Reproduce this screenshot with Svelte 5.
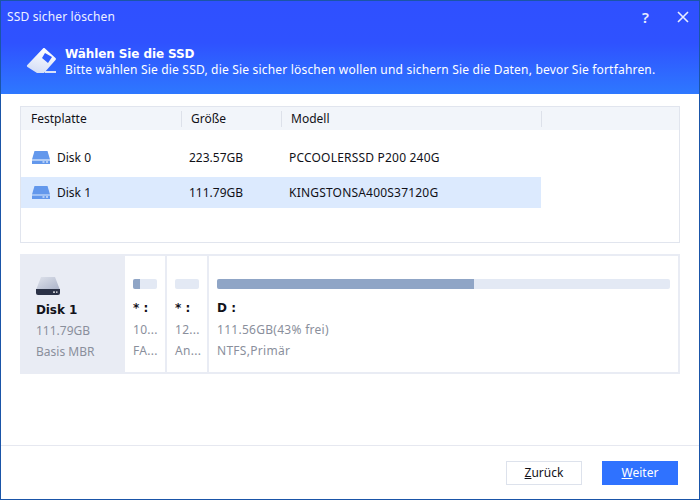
<script>
  const disks = [
    { name: 'Disk 0', size: '223.57GB', model: 'PCCOOLERSSD P200 240G', selected: false },
    { name: 'Disk 1', size: '111.79GB', model: 'KINGSTONSA400S37120G', selected: true }
  ];
  const parts = [
    { cls: 'small', label: '* :', size: '10...', fs: 'FA...', used: 30 },
    { cls: 'small', label: '* :', size: '12...', fs: 'An...', used: 0 },
    { cls: 'wide', label: 'D :', size: '111.56GB(43% frei)', fs: 'NTFS,Primär', used: 56.8 }
  ];
</script>

<div class="window">
  <div class="head">
    <div class="titlebar">
      <span class="title">SSD sicher löschen</span>
      <div class="controls">
        <span class="help">?</span>
        <svg width="12" height="12" viewBox="0 0 12 12"><path d="M1 1l10 10M11 1L1 11" stroke="#e8edff" stroke-width="1.6" fill="none" /></svg>
      </div>
    </div>
    <div class="banner">
      <svg class="eraser" width="32" height="27" viewBox="0 0 32 27">
        <defs>
          <linearGradient id="er" x1="0.6" y1="0" x2="0.3" y2="1">
            <stop offset="0" stop-color="#ffffff" />
            <stop offset="1" stop-color="#d3ddf6" />
          </linearGradient>
        </defs>
        <path fill-rule="evenodd" fill="url(#er)" d="M18 1.500c.6-.6 1.400-.6 2 0L30.500 11c.6.6.6 1.400 0 2L19 26H12L2.500 20c-.8-.6-.8-1.500-.2-2.100zM20 6l-3 5 6 5 4-6z" />
        <rect x="20" y="24" width="11" height="2" fill="#d8e1f8" />
      </svg>
      <div class="banner-text">
        <b>Wählen Sie die SSD</b>
        <span>Bitte wählen Sie die SSD, die Sie sicher löschen wollen und sichern Sie die Daten, bevor Sie fortfahren.</span>
      </div>
    </div>
  </div>

  <div class="content">
    <div class="table">
      <div class="thead">
        <div class="th c1">Festplatte</div>
        <div class="th c2">Größe</div>
        <div class="th c3">Modell</div>
        <div class="th c4"></div>
      </div>
      <div class="tbody">
        {#each disks as d}
          <div class="row" class:selected={d.selected}>
            <div class="c1 disk">
              <svg width="20" height="13" viewBox="0 0 20 13">
                <path d="M3.500 0h13l2.500 8.500H1z" fill="#6398ec" />
                <rect x="1" y="9.500" width="18" height="3.500" fill="#6398ec" />
                <rect x="11.500" y="10.500" width="2" height="1" fill="#fff" />
                <rect x="15" y="10.500" width="2" height="1" fill="#fff" />
              </svg>
              {d.name}
            </div>
            <div class="c2">{d.size}</div>
            <div class="c3 model">{d.model}</div>
          </div>
        {/each}
      </div>
    </div>

    <div class="map">
      <div class="info">
        <svg width="24" height="18" viewBox="0 0 24 18">
          <defs>
            <linearGradient id="hd" x1="0" y1="0" x2="1" y2="1">
              <stop offset="0" stop-color="#dfe3ec" />
              <stop offset="1" stop-color="#aab2c8" />
            </linearGradient>
          </defs>
          <path d="M5 0h14l5 13H0z" fill="url(#hd)" />
          <path d="M0 12h24v4a2 2 0 0 1-2 2H2a2 2 0 0 1-2-2z" fill="#2b3246" />
          <rect x="17" y="14.500" width="2" height="1.200" fill="#fff" />
          <rect x="20" y="14.500" width="1.500" height="1.200" fill="#fff" />
        </svg>
        <b>Disk 1</b>
        <span>111.79GB</span>
        <span>Basis MBR</span>
      </div>
      {#each parts as p}
        <div class="part {p.cls}">
          <div class="bar"><div class="fill" style="width: {p.used}%"></div></div>
          <b>{p.label}</b>
          <span>{p.size}</span>
          <span>{p.fs}</span>
        </div>
      {/each}
    </div>
  </div>

  <div class="footer">
    <button class="btn"><u>Z</u>urück</button>
    <button class="btn primary"><u>W</u>eiter</button>
  </div>
</div>

<style>
  :global(body) {
    margin: 0;
  }

  .window {
    width: 700px;
    height: 500px;
    box-sizing: border-box;
    border: 1px solid #1a55a8;
    display: flex;
    flex-direction: column;
    background: #fff;
    font-family: "Noto Sans", sans-serif;
    font-size: 12px;
    color: #111118;
  }

  .head {
    height: 93px;
    background: linear-gradient(#2f50ff, #2f52ff 45%, #2e78ff);
    color: #fff;
    flex: none;
  }

  .titlebar {
    height: 31px;
    padding: 0 10px 0 6px;
    display: flex;
    align-items: center;
    justify-content: space-between;
    color: #eef1ff;
  }

  .title {
    letter-spacing: 0.15px;
  }

  .controls {
    display: flex;
    align-items: center;
    gap: 28px;
  }

  .help {
    font-size: 15px;
    font-weight: 600;
    color: #e8edff;
  }

  .banner {
    display: flex;
    align-items: flex-start;
    padding: 14px 0 0 24px;
    gap: 8px;
  }

  .eraser {
    margin-top: 1px;
  }

  .banner-text {
    display: flex;
    flex-direction: column;
    line-height: 16px;
  }

  .banner-text b {
    font-family: "DejaVu Sans", sans-serif;
    letter-spacing: -0.1px;
  }

  .banner-text span {
    letter-spacing: 0.19px;
  }

  .content {
    flex: 1;
    padding: 12px 19px 0;
    display: flex;
    flex-direction: column;
    gap: 11px;
  }

  .table {
    height: 137px;
    box-sizing: border-box;
    border: 1px solid #e1e5ee;
  }

  .thead {
    height: 23px;
    background: #f2f5fa;
    display: flex;
    align-items: center;
  }

  .th {
    height: 16px;
    line-height: 16px;
    box-sizing: border-box;
    border-right: 1px solid #dde1ea;
    padding-left: 9px;
  }

  .c1 {
    width: 160px;
  }

  .th.c1 {
    width: 161px;
    padding-left: 10px;
  }

  .c2 {
    width: 100px;
  }

  .c3 {
    width: 260px;
  }

  .th.c4 {
    flex: 1;
    border-right: 0;
  }

  .tbody {
    padding-top: 12px;
    display: flex;
    flex-direction: column;
    gap: 4px;
  }

  .row {
    width: 520px;
    height: 31px;
    display: flex;
    align-items: center;
  }

  .row.selected {
    background: #dceafe;
  }

  .row .c2 {
    padding-left: 8px;
    box-sizing: border-box;
  }

  .row .c3 {
    padding-left: 8px;
    box-sizing: border-box;
  }

  .model {
    letter-spacing: 0.2px;
  }

  .disk {
    display: flex;
    align-items: center;
    gap: 6px;
    padding-left: 10px;
    box-sizing: border-box;
  }

  .map {
    height: 120px;
    box-sizing: border-box;
    border: 2px solid #e9ecf4;
    background: #e9ecf4;
    display: flex;
    gap: 2px;
  }

  .info {
    width: 101px;
    padding: 21px 0 0 14px;
    box-sizing: border-box;
    display: flex;
    flex-direction: column;
    color: #8a8f9c;
    line-height: 21px;
  }

  .info svg {
    margin-bottom: 5px;
  }

  .info b {
    color: #12121a;
    line-height: 20px;
    font-family: "DejaVu Sans", sans-serif;
    letter-spacing: -0.1px;
  }

  .part {
    background: #fff;
    padding: 23px 8px 0;
    box-sizing: border-box;
    display: flex;
    flex-direction: column;
    color: #8a8f9c;
    line-height: 21px;
    white-space: nowrap;
    letter-spacing: 0.28px;
  }

  .part.small {
    width: 40px;
  }

  .part.wide {
    flex: 1;
  }

  .part b {
    color: #12121a;
    margin-top: 9px;
    font-family: "DejaVu Sans", sans-serif;
    letter-spacing: 0;
  }

  .bar {
    height: 10px;
    background: #e3e9f4;
    border-radius: 2px;
    overflow: hidden;
  }

  .fill {
    height: 100%;
    background: #8fa5c6;
  }

  .footer {
    height: 54px;
    flex: none;
    box-sizing: border-box;
    border-top: 1px solid #e6e8f0;
    display: flex;
    justify-content: flex-end;
    align-items: center;
    gap: 20px;
    padding: 0 21px 0 0;
  }

  .btn {
    width: 76px;
    height: 24px;
    padding: 0;
    box-sizing: border-box;
    border: 1px solid #dde2ec;
    background: #fff;
    font: inherit;
    color: inherit;
  }

  .btn.primary {
    background: #2f72ff;
    border-color: #2f72ff;
    color: #fff;
  }
</style>
